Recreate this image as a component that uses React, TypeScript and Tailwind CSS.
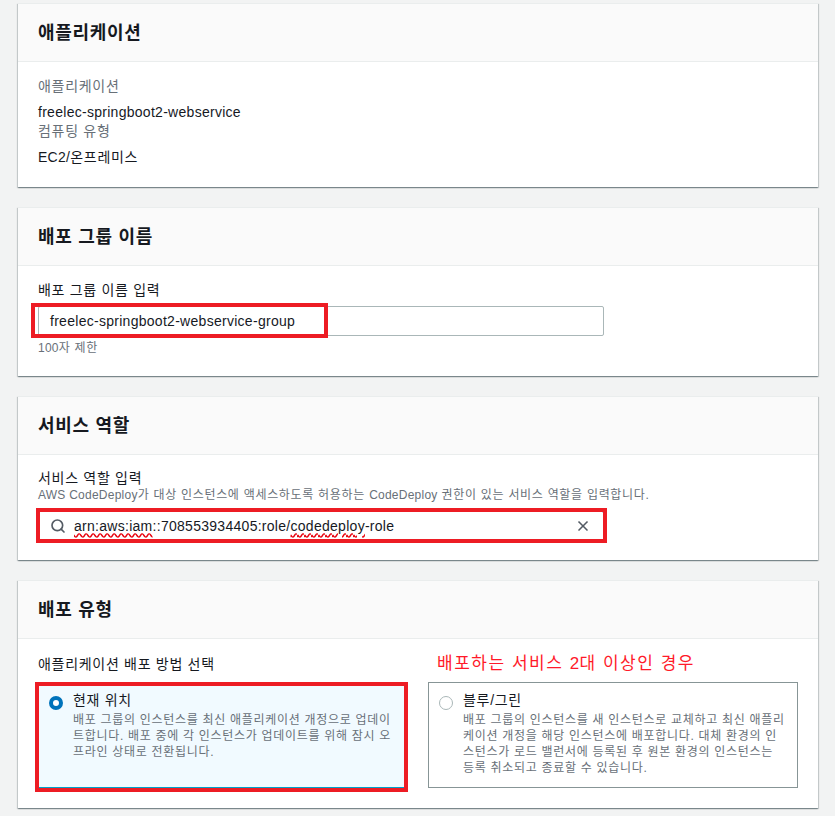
import { Search, X } from 'lucide-react';
import type { ReactNode } from 'react';

// Latin runs keep near-normal spacing; Hangul gets a little tracking to match the wider Korean face
function L({ children }: { children: ReactNode }) {
  return <span className="tracking-[0.02em]">{children}</span>;
}

function Card({ title, children }: { title: string; children: ReactNode }) {
  return (
    <section className="bg-white border-t border-[#eaeded] shadow-[0_1px_1px_0_rgba(0,28,36,0.3),1px_1px_1px_0_rgba(0,28,36,0.15),-1px_1px_1px_0_rgba(0,28,36,0.15)]">
      <div className="h-[58px] flex items-center px-5 bg-[#fafafa] border-b border-[#eaeded]">
        <h2 className="text-[18px] font-bold text-[#16191f] leading-6">{title}</h2>
      </div>
      <div className="px-5">{children}</div>
    </section>
  );
}

function RadioTile({
  checked,
  title,
  desc,
}: {
  checked?: boolean;
  title: string;
  desc: string;
}) {
  return (
    <div
      className={`relative flex gap-[10px] pl-[10px] pr-[10px] pt-[7px] pb-[11px] border ${
        checked ? 'bg-[#f1faff] border-[#00a1c9]' : 'bg-white border-[#879596]'
      }`}
    >
      {checked ? (
        <span className="mt-[6px] w-[14px] h-[14px] shrink-0 rounded-full border-[4px] border-[#0073bb] bg-white" />
      ) : (
        <span className="mt-[6px] w-[14px] h-[14px] shrink-0 rounded-full border-[1.5px] border-[#aab7b8] bg-white" />
      )}
      <div className="min-w-0">
        <div className="text-[14px] leading-5 text-[#16191f]">{title}</div>
        <p className="mt-[2px] text-[12px] leading-4 text-[#687078]">{desc}</p>
      </div>
      {/* red annotation box */}
      {checked && (
        <div className="absolute -left-[4px] -top-[1px] -right-[1px] -bottom-[5px] border-[4px] border-[#ed1c24] pointer-events-none" />
      )}
    </div>
  );
}

export default function App() {
  return (
    <div className="min-h-[816px] bg-[#f2f3f3] pt-[3px] pl-[18px] pr-[17px] pb-5 font-['Liberation_Sans','Noto_Sans_CJK_KR',sans-serif] text-[14px] text-[#16191f] tracking-[0.05em]">
      <div className="flex flex-col gap-5 w-[800px]">
        {/* 애플리케이션 */}
        <Card title="애플리케이션">
          <div className="pt-[14px] pb-5">
            <div className="leading-5 text-[#687078]">애플리케이션</div>
            <div className="mt-[6px] leading-5"><L>freelec-springboot2-webservice</L></div>
            <div className="leading-[18px] text-[#687078]">컴퓨팅 유형</div>
            <div className="mt-[7px] leading-5"><L>EC2/</L>온프레미스</div>
          </div>
        </Card>

        {/* 배포 그룹 이름 */}
        <Card title="배포 그룹 이름">
          <div className="pt-[14px] pb-[19px]">
            <label className="block leading-5 text-[#16191f]">배포 그룹 이름 입력</label>
            <div className="relative mt-[6px] w-[566px]">
              <div className="h-[30px] flex items-center pl-[11px] border border-[#aab7b8] rounded-[2px] bg-white">
                <L>freelec-springboot2-webservice-group</L>
              </div>
              <div className="absolute -left-[7px] -top-[3px] w-[297px] -bottom-[2px] border-[4px] border-[#ed1c24] pointer-events-none" />
            </div>
            <div className="mt-[3px] text-[12px] leading-[18px] text-[#687078]"><L>100</L>자 제한</div>
          </div>
        </Card>

        {/* 서비스 역할 */}
        <Card title="서비스 역할">
          <div className="pt-[14px] pb-[19px]">
            <label className="block leading-[18px] text-[#16191f]">서비스 역할 입력</label>
            <div className="text-[12px] leading-4 text-[#687078]">
              <L>AWS CodeDeploy</L>가 대상 인스턴스에 액세스하도록 허용하는 <L>CodeDeploy</L> 권한이 있는 서비스 역할을 입력합니다.
            </div>
            <div className="relative mt-[8px] w-[566px]">
              <div className="h-[30px] flex items-center pl-[11px] pr-[12px] gap-[8px] border border-[#00a1c9] rounded-[2px] bg-white tracking-[0.02em]">
                <Search className="w-[16px] h-[16px] text-[#545b64] shrink-0" strokeWidth={2.5} />
                <span className="flex-1">
                  <span className="underline decoration-wavy decoration-red-600 underline-offset-2">arn:aws:iam</span>
                  ::708553934405:role/
                  <span className="underline decoration-wavy decoration-red-600 underline-offset-2">codedeploy</span>
                  -role
                </span>
                <X className="w-[16px] h-[16px] text-[#545b64] shrink-0" strokeWidth={2.5} />
              </div>
              <div className="absolute -left-[2px] -top-[3px] -right-[3px] -bottom-[2px] border-[4px] border-[#ed1c24] pointer-events-none" />
            </div>
          </div>
        </Card>

        {/* 배포 유형 */}
        <Card title="배포 유형">
          <div className="pt-[15px] pb-5">
            <div className="grid grid-cols-2 gap-x-5">
              <div className="leading-5 text-[#16191f]">애플리케이션 배포 방법 선택</div>
              <div className="pl-[9px] text-[17px] leading-5 tracking-[0.09em] text-[#ff1a2a]">배포하는 서비스 <L>2</L>대 이상인 경우</div>
            </div>
            <div className="mt-[8px] grid grid-cols-2 gap-x-5">
              <RadioTile
                checked
                title="현재 위치"
                desc="배포 그룹의 인스턴스를 최신 애플리케이션 개정으로 업데이트합니다. 배포 중에 각 인스턴스가 업데이트를 위해 잠시 오프라인 상태로 전환됩니다."
              />
              <RadioTile
                title="블루/그린"
                desc="배포 그룹의 인스턴스를 새 인스턴스로 교체하고 최신 애플리케이션 개정을 해당 인스턴스에 배포합니다. 대체 환경의 인스턴스가 로드 밸런서에 등록된 후 원본 환경의 인스턴스는 등록 취소되고 종료할 수 있습니다."
              />
            </div>
          </div>
        </Card>
      </div>
    </div>
  );
}
